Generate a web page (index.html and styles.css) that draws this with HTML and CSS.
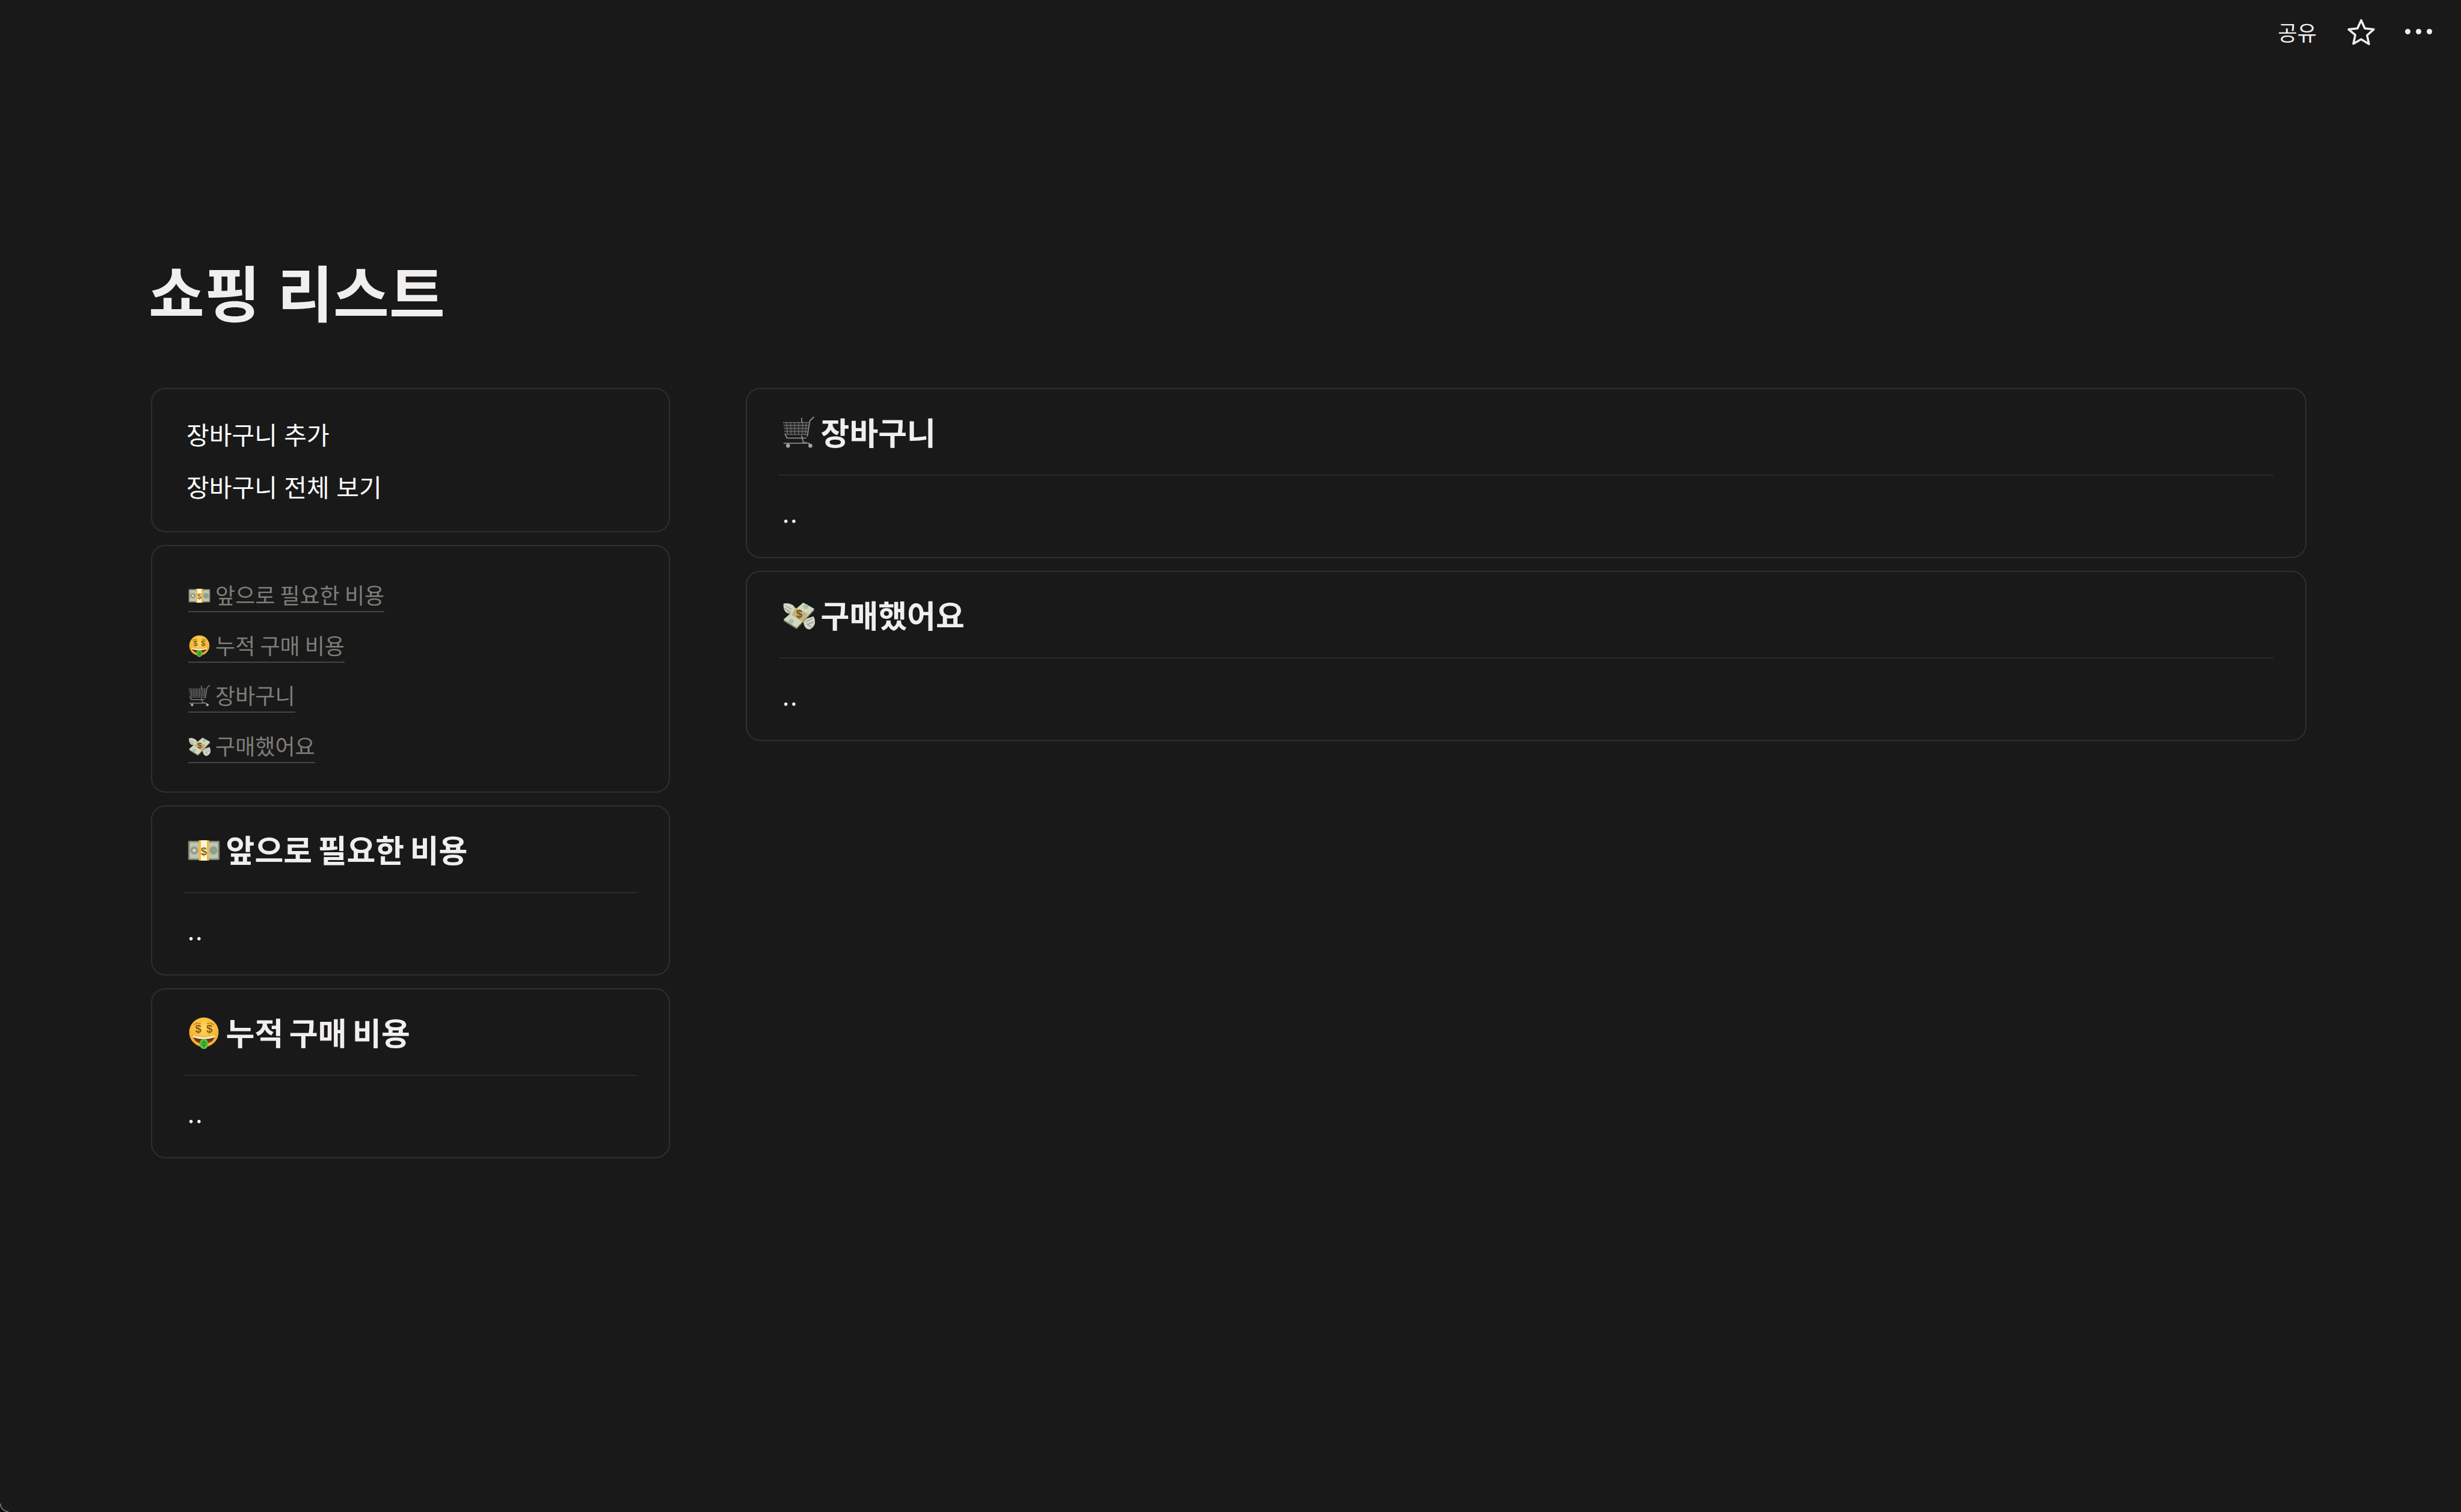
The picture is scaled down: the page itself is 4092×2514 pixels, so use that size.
FILE: index.html
```html
<!DOCTYPE html>
<html lang="ko">
<head>
<meta charset="UTF-8">
<meta name="viewport" content="width=device-width, initial-scale=1">
<title>쇼핑 리스트</title>
<link rel="stylesheet" href="styles.css">
</head>
<body>

<svg class="sprite" width="0" height="0" aria-hidden="true">
  <defs>
    <radialGradient id="faceFill" cx="50%" cy="35%" r="70%">
      <stop offset="0" stop-color="#ffd95a"/>
      <stop offset="1" stop-color="#f4a423"/>
    </radialGradient>
    <symbol id="emoji-money" viewBox="0 0 64 64">
      <rect x="1" y="13" width="62" height="38" rx="2" fill="#7f8474"/>
      <rect x="4" y="16" width="56" height="32" fill="#c0c5b1"/>
      <circle cx="13" cy="32" r="8" fill="#969c88"/>
      <circle cx="51" cy="32" r="8" fill="#969c88"/>
      <circle cx="13" cy="32" r="3" fill="#dfe3d2"/>
      <circle cx="51" cy="32" r="3" fill="#6fae94"/>
      <rect x="22" y="12" width="20" height="40" fill="#f3b92f"/>
      <rect x="26" y="12" width="12" height="40" fill="#fdf6dc"/>
      <text x="32" y="41" class="emoji-sign" fill="#8a6a14">$</text>
    </symbol>
    <symbol id="emoji-face" viewBox="0 0 64 64">
      <circle cx="32" cy="30" r="29" fill="url(#faceFill)"/>
      <path d="M13 15q6-5 12-2M39 13q6-3 12 2" fill="none" stroke="#b8761a" stroke-width="2" stroke-linecap="round"/>
      <text x="21" y="31" class="emoji-sign" fill="#8a5a14">$</text>
      <text x="43" y="31" class="emoji-sign" fill="#8a5a14">$</text>
      <path d="M10 36q22 8 44 0q-3 16-22 16T10 36z" fill="#6b3a14"/>
      <path d="M10 36q22 8 44 0l-1 4q-21 7-42 0z" fill="#fff6dc"/>
      <rect x="24" y="43" width="16" height="20" rx="8" fill="#58c63e"/>
      <circle cx="32" cy="53" r="4" fill="none" stroke="#2e8b2a" stroke-width="2"/>
      <rect x="31" y="46" width="2" height="14" fill="#2e8b2a"/>
    </symbol>
    <symbol id="emoji-cart" viewBox="0 0 64 64">
      <path d="M1 11h51l-4 23H5z" fill="#2a2a2a"/>
      <path d="M1 11h51M2 17h49M3 23h47M4 29h45M5 35h43M8 11l2 24M16 11l1 24M24 11v24M32 11v24M40 11l-1 24M47 11l-2 24" fill="none" stroke="#6e6e6e" stroke-width="1.500"/>
      <path d="M49 38l5-30 8-8M5 34l4 8h37M3 52h49M38 38l3 12 12 3M38 3v8" fill="none" stroke="#8a8a8a" stroke-width="2.200" stroke-linecap="round" stroke-linejoin="round"/>
      <circle cx="11" cy="57" r="4" fill="#a8a29a"/>
      <circle cx="55" cy="57" r="4" fill="#a8a29a"/>
    </symbol>
    <symbol id="emoji-wings" viewBox="0 0 64 64">
      <path d="M2 8q10-3 20 4l4 6-8 10q-6 0-10-2-5-4-6-12 0-3 0-6z" fill="#d4d6c6"/>
      <path d="M40 40l21-7q4 6 3 14-3 9-11 12-7-1-10-8z" fill="#d4d6c6"/>
      <path d="M5 12l13 7M3 17l12 6M8 23l9 3M59 37l-13 7M62 44l-13 5M57 54l-9-6" stroke="#8e917f" stroke-width="1.300"/>
      <path d="M2 42L41 9l22 12-35 37z" fill="#7f8371"/>
      <path d="M2 39L41 6l22 12-35 37z" fill="#d3d7c2"/>
      <circle cx="46" cy="14" r="5" fill="#a4c2a6"/>
      <circle cx="17" cy="43" r="5" fill="#a4c2a6"/>
      <path d="M26 16l24 12-10 16-22-14z" fill="#bdb38c"/>
      <path d="M26 16l24 12-1 2-24-12zM18 30l22 14 1-2-22-14z" fill="#e8b12e"/>
      <text x="33" y="36" class="emoji-sign" fill="#6d5218">$</text>
    </symbol>
  </defs>
</svg>

<div class="app">
  <header class="topbar">
    <span class="share">공유</span>
    <svg class="star" viewBox="0 0 46 44" aria-hidden="true"><path d="M23 3.500l5.900 13 14.100 1.500-10.600 9.500 3 13.900L23 33.800 10.600 40.900l3-13.900L3 18l14.100-1.500z" fill="none" stroke="currentColor" stroke-width="3.400" stroke-linejoin="round"/></svg>
    <div class="more"><i></i><i></i><i></i></div>
  </header>

  <main class="page">
    <h1 class="page-title">쇼핑 리스트</h1>

    <div class="columns">
      <div class="col">
        <section class="card card-actions">
          <div class="action">장바구니 추가</div>
          <div class="action">장바구니 전체 보기</div>
        </section>

        <section class="card card-links">
          <div class="link-row"><a class="link"><svg class="emoji"><use href="#emoji-money"/></svg> 앞으로 필요한 비용</a></div>
          <div class="link-row"><a class="link"><svg class="emoji"><use href="#emoji-face"/></svg> 누적 구매 비용</a></div>
          <div class="link-row"><a class="link"><svg class="emoji"><use href="#emoji-cart"/></svg> 장바구니</a></div>
          <div class="link-row"><a class="link"><svg class="emoji"><use href="#emoji-wings"/></svg> 구매했어요</a></div>
        </section>

        <section class="card card-list">
          <h3 class="list-title"><svg class="emoji"><use href="#emoji-money"/></svg> 앞으로 필요한 비용</h3>
          <p class="list-body">..</p>
        </section>

        <section class="card card-list">
          <h3 class="list-title"><svg class="emoji"><use href="#emoji-face"/></svg> 누적 구매 비용</h3>
          <p class="list-body">..</p>
        </section>
      </div>

      <div class="col">
        <section class="card card-list">
          <h3 class="list-title"><svg class="emoji"><use href="#emoji-cart"/></svg> 장바구니</h3>
          <p class="list-body">..</p>
        </section>

        <section class="card card-list">
          <h3 class="list-title"><svg class="emoji"><use href="#emoji-wings"/></svg> 구매했어요</h3>
          <p class="list-body">..</p>
        </section>
      </div>
    </div>
  </main>
</div>
<div class="window-corner"></div>
</body>
</html>
```

FILE: styles.css
```css
:root{
  --bg:#191919;--text:#f0efed;--sub:#7f7d78;--border:#2f2f2f;--line:#2a2a2a;--under:#454545
}
*{box-sizing:border-box;margin:0;padding:0}
html,body{height:100%;background:var(--bg)}
body{font-family:"Noto Sans CJK KR","Liberation Sans",sans-serif;color:var(--text);overflow:hidden}
.sprite{position:absolute}
.app{height:100%;background:var(--bg)}
/* rounded corner of the window, bottom left */
.window-corner{position:fixed;left:0;bottom:0;width:14px;height:14px;background:radial-gradient(circle at 100% 0,transparent 12px,#8a8a8a 13px,#0c0c0c 15px)}

.topbar{display:flex;align-items:center;justify-content:flex-end;height:105px;padding-right:48px}
.share{font-size:35px;line-height:1;margin-right:50px}
.star{width:48px;height:46px;color:var(--text);margin-right:49px}
.more{display:flex;gap:9px}
.more i{width:9px;height:9px;border-radius:50%;background:var(--text)}

.page{padding:0 0 0 251px}
.page-title{font-size:101px;line-height:130px;font-weight:700;padding-top:313px;margin:0 0 97px -4px}

.columns{display:grid;grid-template-columns:863px 2595px;column-gap:126px;align-items:start}
.col{display:flex;flex-direction:column;gap:21px}

.card{border:2px solid var(--border);border-radius:24px}
.card-actions{padding:31px 57px 31px}
.action{font-size:41px;line-height:87px;color:#fff}
.card-links{padding:39px 57px 35px}
.link-row{font-size:36px;line-height:83.500px;height:83.500px;color:var(--sub);word-spacing:-2px}
.link{display:inline-block;line-height:56px;border-bottom:2px solid var(--under);margin-left:3px}
.link .emoji{width:37px;height:37px}

.card-list{padding:22px 53px 29px}
.list-title{font-size:52px;line-height:98px;font-weight:700;word-spacing:-5px;padding:0 6px 22px;border-bottom:2px solid var(--line)}
.list-title .emoji{width:54px;height:54px}
.list-body{font-size:40px;line-height:87px;letter-spacing:2px;padding:19px 6px 0;color:#fff}

.emoji{vertical-align:-.14em}
.emoji-sign{font:700 22px "Liberation Sans",sans-serif;text-anchor:middle}
```
